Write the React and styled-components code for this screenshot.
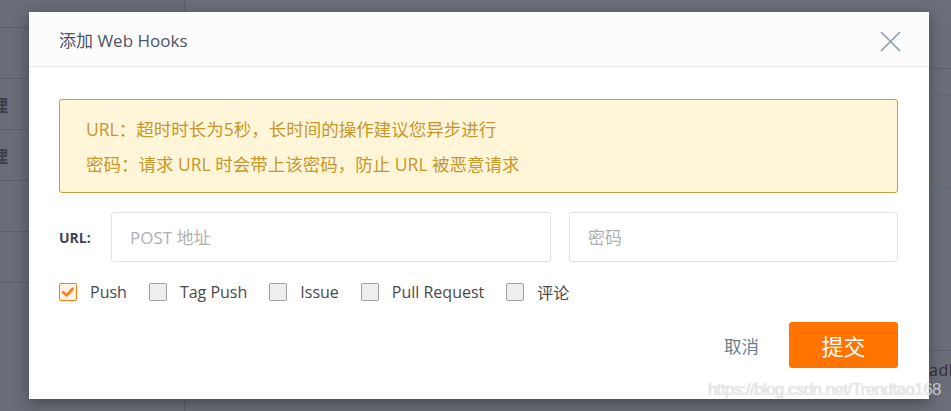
import React from "react";
import styled, { createGlobalStyle } from "styled-components";

const Global = createGlobalStyle`
  html, body { margin: 0; padding: 0; }
  body {
    background: #6b6d79;
    font-family: "Open Sans", "Noto Sans CJK SC", sans-serif;
    overflow: hidden;
  }
`;

const Screen = styled.div`
  position: relative;
  width: 951px;
  height: 411px;
  overflow: hidden;
  background: #6b6d79;
`;

const BgPage = styled.div`
  display: grid;
  grid-template-columns: 185px 1fr;
  height: 100%;
`;

const Sidebar = styled.div`
  border-right: 1px solid #5c5e6a;
  padding-top: 27px;
  background: #696b77;
`;

const SideRow = styled.div`
  height: 50px;
  border-top: 1px solid #5b5d69;
  display: flex;
  align-items: center;
  font-size: 17px;
  font-weight: 600;
  color: #3d404b;
  font-family: "Noto Sans CJK SC", sans-serif;
  span { margin-left: -9px; }
`;

const Main = styled.div`
  display: flex;
  flex-direction: column;
`;

const MainRow = styled.div`
  height: ${(p) => p.$h}px;
  border-bottom: 1px solid ${(p) => p.$line || "#5d5f6b"};
  flex-shrink: 0;
`;

const MainText = styled.div`
  display: flex;
  justify-content: flex-end;
  padding-top: 8px;
  font-size: 16px;
  color: #2e313b;
  font-family: "Open Sans", sans-serif;
  letter-spacing: 0.5px;
  span { margin-right: -8px; }
`;

const Modal = styled.div`
  position: absolute;
  left: 29px;
  top: 12px;
  width: 900px;
  background: #fff;
  box-shadow: 0 4px 14px rgba(0, 0, 0, 0.35);
  display: flex;
  flex-direction: column;
`;

const Header = styled.div`
  height: 55px;
  box-sizing: border-box;
  background: #fcfcfc;
  border-bottom: 1px solid #e4e5e7;
  display: flex;
  align-items: center;
  justify-content: space-between;
  padding: 0 28px 0 30px;
`;

const Title = styled.div`
  font-size: 17px;
  color: #4e5467;
`;

const Close = styled.button`
  border: 0;
  background: transparent;
  padding: 0;
  width: 22px;
  height: 22px;
  margin-top: 4px;
  display: flex;
  align-items: center;
  justify-content: center;
  cursor: pointer;
`;

const Body = styled.div`
  padding: 32px 31px 31px 30px;
  display: flex;
  flex-direction: column;
`;

const Alert = styled.div`
  background: #fff6d9;
  border: 1px solid #c7a03d;
  border-radius: 3px;
  padding: 12px 26px 10px;
  color: #c7972c;
  font-size: 17.5px;
  line-height: 35px;
`;

const FormRow = styled.div`
  margin-top: 19px;
  display: grid;
  grid-template-columns: 34px 440px 1fr;
  column-gap: 18px;
  align-items: center;
`;

const Label = styled.label`
  font-size: 14px;
  font-weight: 700;
  color: #3e4558;
  white-space: nowrap;
`;

const Input = styled.input`
  height: 50px;
  box-sizing: border-box;
  border: 1px solid #dde3e7;
  border-radius: 3px;
  padding: 0 18px;
  font-size: 17px;
  font-family: "Open Sans", "Noto Sans CJK SC", sans-serif;
  color: #333;
  outline: none;
  width: 100%;
  &::placeholder { color: #b0b0b0; }
`;

const Checks = styled.div`
  margin-top: 18px;
  display: flex;
  align-items: center;
  gap: 22px;
`;

const CheckItem = styled.label`
  display: flex;
  align-items: center;
  gap: 13px;
  font-size: 16px;
  color: #4a4a4a;
  cursor: pointer;
`;

const Box = styled.span`
  width: 18px;
  height: 18px;
  box-sizing: border-box;
  border-radius: 2px;
  border: 1px solid ${(p) => (p.$on ? "#ff7a14" : "#a3a3a3")};
  background: ${(p) => (p.$on ? "#fff3e8" : "#eeeeee")};
  display: flex;
  align-items: center;
  justify-content: center;
`;

const Footer = styled.div`
  margin-top: 18px;
  display: flex;
  justify-content: flex-end;
  align-items: center;
  gap: 30px;
`;

const Cancel = styled.button`
  border: 0;
  background: transparent;
  padding: 0;
  font-size: 17.5px;
  color: #66808e;
  font-family: "Noto Sans CJK SC", sans-serif;
  cursor: pointer;
`;

const Submit = styled.button`
  width: 109px;
  height: 46px;
  border: 0;
  border-radius: 3px;
  background: #ff7400;
  color: #fff;
  font-size: 22px;
  font-family: "Noto Sans CJK SC", sans-serif;
  cursor: pointer;
`;

const Watermark = styled.div`
  position: absolute;
  left: 708px;
  top: 380px;
  font-family: "Liberation Sans", Arial, sans-serif;
  font-size: 17px;
  letter-spacing: -0.6px;
  color: rgba(255, 255, 255, 0.62);
  text-shadow: 0 0 1px rgba(120, 120, 120, 0.5);
  white-space: nowrap;
  pointer-events: none;
`;

const CheckMark = () => (
  <svg width="14" height="14" viewBox="0 0 14 14">
    <path d="M2.2 7.2 L5.6 10.4 L11.8 3.6" fill="none" stroke="#ff7a14" strokeWidth="2.6" strokeLinecap="round" strokeLinejoin="round" />
  </svg>
);

const CloseIcon = () => (
  <svg width="21" height="21" viewBox="0 0 21 21">
    <path d="M1 1 L20 20 M20 1 L1 20" stroke="#8aa0ac" strokeWidth="1.7" fill="none" />
  </svg>
);

const options = [
  { label: "Push", on: true },
  { label: "Tag Push" },
  { label: "Issue" },
  { label: "Pull Request" },
  { label: "评论" },
];

export default function App() {
  return (
    <>
      <Global />
      <Screen>
        <BgPage>
          <Sidebar>
            <SideRow />
            <SideRow><span>理</span></SideRow>
            <SideRow><span>理</span></SideRow>
            <SideRow />
            <SideRow />
            <SideRow />
          </Sidebar>
          <Main>
            <MainRow $h={68} />
            <MainRow $h={26} $line="#5a6a7c" />
            <MainRow $h={92} $line="#5a6a7c" />
            <MainRow $h={161} />
            <MainText><span>adb</span></MainText>
          </Main>
        </BgPage>

        <Modal>
          <Header>
            <Title>添加 Web Hooks</Title>
            <Close aria-label="close"><CloseIcon /></Close>
          </Header>
          <Body>
            <Alert>
              <div>URL：超时时长为5秒，长时间的操作建议您异步进行</div>
              <div>密码：请求 URL 时会带上该密码，防止 URL 被恶意请求</div>
            </Alert>
            <FormRow>
              <Label>URL:</Label>
              <Input placeholder="POST 地址" />
              <Input placeholder="密码" />
            </FormRow>
            <Checks>
              {options.map((o) => (
                <CheckItem key={o.label}>
                  <Box $on={o.on}>{o.on && <CheckMark />}</Box>
                  {o.label}
                </CheckItem>
              ))}
            </Checks>
            <Footer>
              <Cancel>取消</Cancel>
              <Submit>提交</Submit>
            </Footer>
          </Body>
        </Modal>
        <Watermark>https://blog.csdn.net/Trendtao168</Watermark>
      </Screen>
    </>
  );
}
